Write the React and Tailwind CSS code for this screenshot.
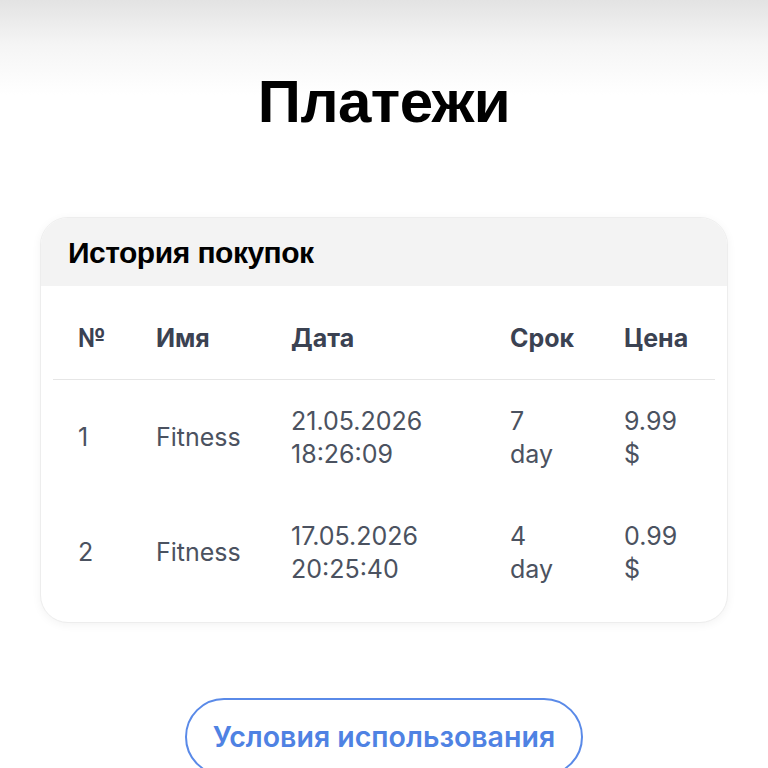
const rows = [
  { n: "1", name: "Fitness", date: "21.05.2026", time: "18:26:09", term: "7", price: "9.99" },
  { n: "2", name: "Fitness", date: "17.05.2026", time: "20:25:40", term: "4", price: "0.99" },
];

const cols = "grid grid-cols-[78px_135px_219px_114px_1fr]";

export default function App() {
  return (
    <div className="min-h-[768px] bg-[linear-gradient(to_bottom,#e3e3e3_0px,#f5f5f5_45px,#ffffff_95px)] font-['Liberation_Sans',sans-serif]">
      <h1 className="pt-[62px] text-center text-[60px] leading-[80px] font-bold text-black tracking-[-0.5px]">
        Платежи
      </h1>

      <div className="mx-[40px] mt-[75px] rounded-[28px] border border-[#ededed] bg-white shadow-[0_2px_10px_rgba(0,0,0,0.05)] overflow-hidden">
        <div className="h-[68px] bg-[#f3f3f3] px-[27px] flex items-center">
          <h2 className="text-[30px] font-bold text-black tracking-[-0.5px]">История покупок</h2>
        </div>

        <div className="px-3 pt-3 pb-3 font-['Inter',sans-serif]">
          <div className={`${cols} h-[82px] items-center border-b border-[#e6e6e6] text-[25px] font-bold text-[#3b4252]`}>
            <div className="pl-[25px]">№</div>
            <div className="pl-[25px]">Имя</div>
            <div className="pl-[25px]">Дата</div>
            <div className="pl-[25px]">Срок</div>
            <div className="pl-[25px]">Цена</div>
          </div>

          {rows.map((r) => (
            <div key={r.n} className={`${cols} h-[115px] items-center text-[25px] leading-[33px] text-[#4b5260]`}>
              <div className="pl-[25px]">{r.n}</div>
              <div className="pl-[25px]">{r.name}</div>
              <div className="pl-[25px]">
                <div>{r.date}</div>
                <div>{r.time}</div>
              </div>
              <div className="pl-[25px]">
                <div>{r.term}</div>
                <div>day</div>
              </div>
              <div className="pl-[25px]">
                <div>{r.price}</div>
                <div>$</div>
              </div>
            </div>
          ))}
        </div>
      </div>

      <div className="flex justify-center mt-[75px]">
        <button className="h-[78px] w-[398px] rounded-full border-2 border-[#5a8ae8] text-[28.5px] font-semibold text-[#4f82e3] font-['Inter',sans-serif]">
          Условия использования
        </button>
      </div>
    </div>
  );
}
